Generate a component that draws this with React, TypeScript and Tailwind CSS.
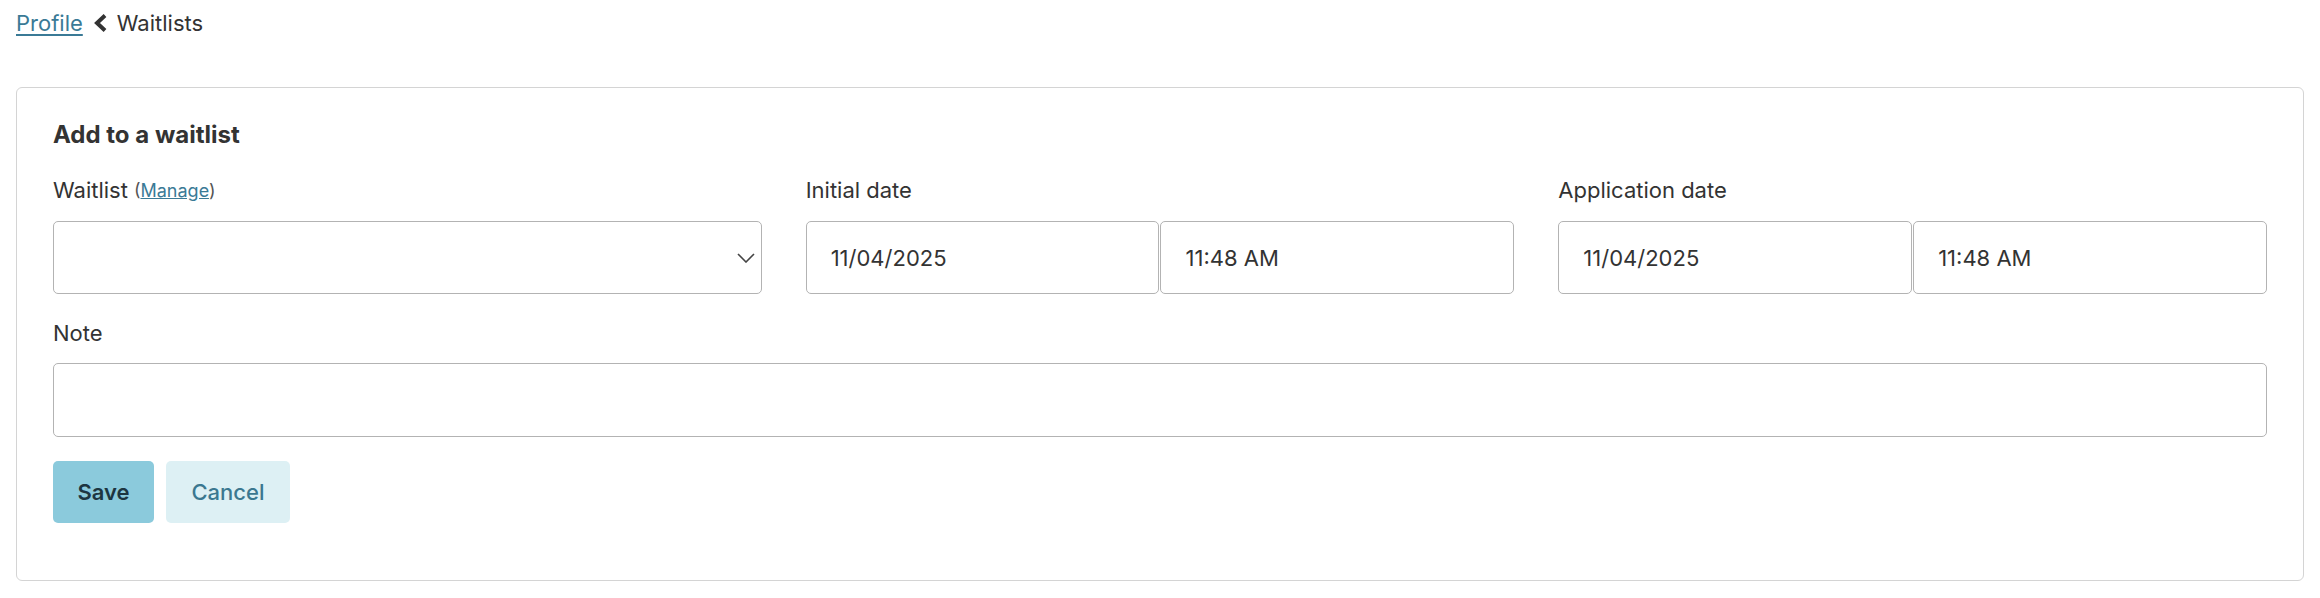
function DateTimePair({ date, time }: { date: string; time: string }) {
    return (
        <div className="flex gap-px">
            <input
                readOnly
                value={date}
                className="h-[73px] w-1/2 min-w-0 rounded-[5px] border border-[#b3b3b3] bg-white px-6 text-[22px] text-[#333] outline-none"
            />
            <input
                readOnly
                value={time}
                className="h-[73px] w-1/2 min-w-0 rounded-[5px] border border-[#b3b3b3] bg-white px-6 text-[22px] text-[#333] outline-none"
            />
        </div>
    )
}

export default function App() {
    return (
        <div className="min-h-[598px] bg-white px-4 text-[#333]" style={{ fontFamily: 'Inter, "Noto Sans", sans-serif' }}>
            {/* Breadcrumb */}
            <div className="flex h-[46px] items-center gap-[9px] text-[22px]">
                <a href="#" className="text-[#3a7a96] underline underline-offset-[3px]">Profile</a>
                <svg width="16" height="20" viewBox="0 0 16 20" className="text-[#333]">
                    <path d="M13 2.5 L5 10 L13 17.5" fill="none" stroke="currentColor" strokeWidth="4" strokeLinejoin="miter" />
                </svg>
                <span>Waitlists</span>
            </div>

            {/* Card */}
            <div className="mt-[41px] rounded-[6px] border border-[#d4d4d4] px-9 pt-[31px] pb-[57px]">
                <h2 className="text-[24px] leading-[32px] font-bold text-[#333]">Add to a waitlist</h2>

                <div className="mt-6 grid grid-cols-3 gap-x-[44px]">
                    <div>
                        <div className="flex h-[30px] items-center gap-[6px] text-[22px]">
                            <span>Waitlist</span>
                            <span className="text-[18px] text-[#555]">
                                (<a href="#" className="text-[#3a7a96] underline">Manage</a>)
                            </span>
                        </div>
                        <div className="relative mt-4">
                            <select className="h-[73px] w-full appearance-none rounded-[5px] border border-[#b3b3b3] bg-white px-6 text-[22px] outline-none">
                                <option></option>
                            </select>
                            <svg width="18" height="10" viewBox="0 0 18 10" className="pointer-events-none absolute top-1/2 right-[7px] -translate-y-1/2 text-[#444]">
                                <path d="M1 1 L9 9 L17 1" fill="none" stroke="currentColor" strokeWidth="1.6" />
                            </svg>
                        </div>
                    </div>

                    <div>
                        <div className="flex h-[30px] items-center text-[22px]">Initial date</div>
                        <div className="mt-4">
                            <DateTimePair date="11/04/2025" time="11:48 AM" />
                        </div>
                    </div>

                    <div>
                        <div className="flex h-[30px] items-center text-[22px]">Application date</div>
                        <div className="mt-4">
                            <DateTimePair date="11/04/2025" time="11:48 AM" />
                        </div>
                    </div>
                </div>

                <div className="mt-6 flex h-[30px] items-center text-[22px]">Note</div>
                <input
                    readOnly
                    className="mt-[15px] block h-[74px] w-full rounded-[5px] border border-[#b3b3b3] bg-white px-6 text-[22px] outline-none"
                />

                <div className="mt-6 flex gap-3">
                    <button className="h-[62px] w-[101px] rounded-[5px] bg-[#8bcadc] text-[22px] font-semibold text-[#1d3541]">Save</button>
                    <button className="h-[62px] w-[124px] rounded-[5px] bg-[#ddf0f4] text-[22px] font-medium text-[#3b7890]">Cancel</button>
                </div>
            </div>
        </div>
    )
}
